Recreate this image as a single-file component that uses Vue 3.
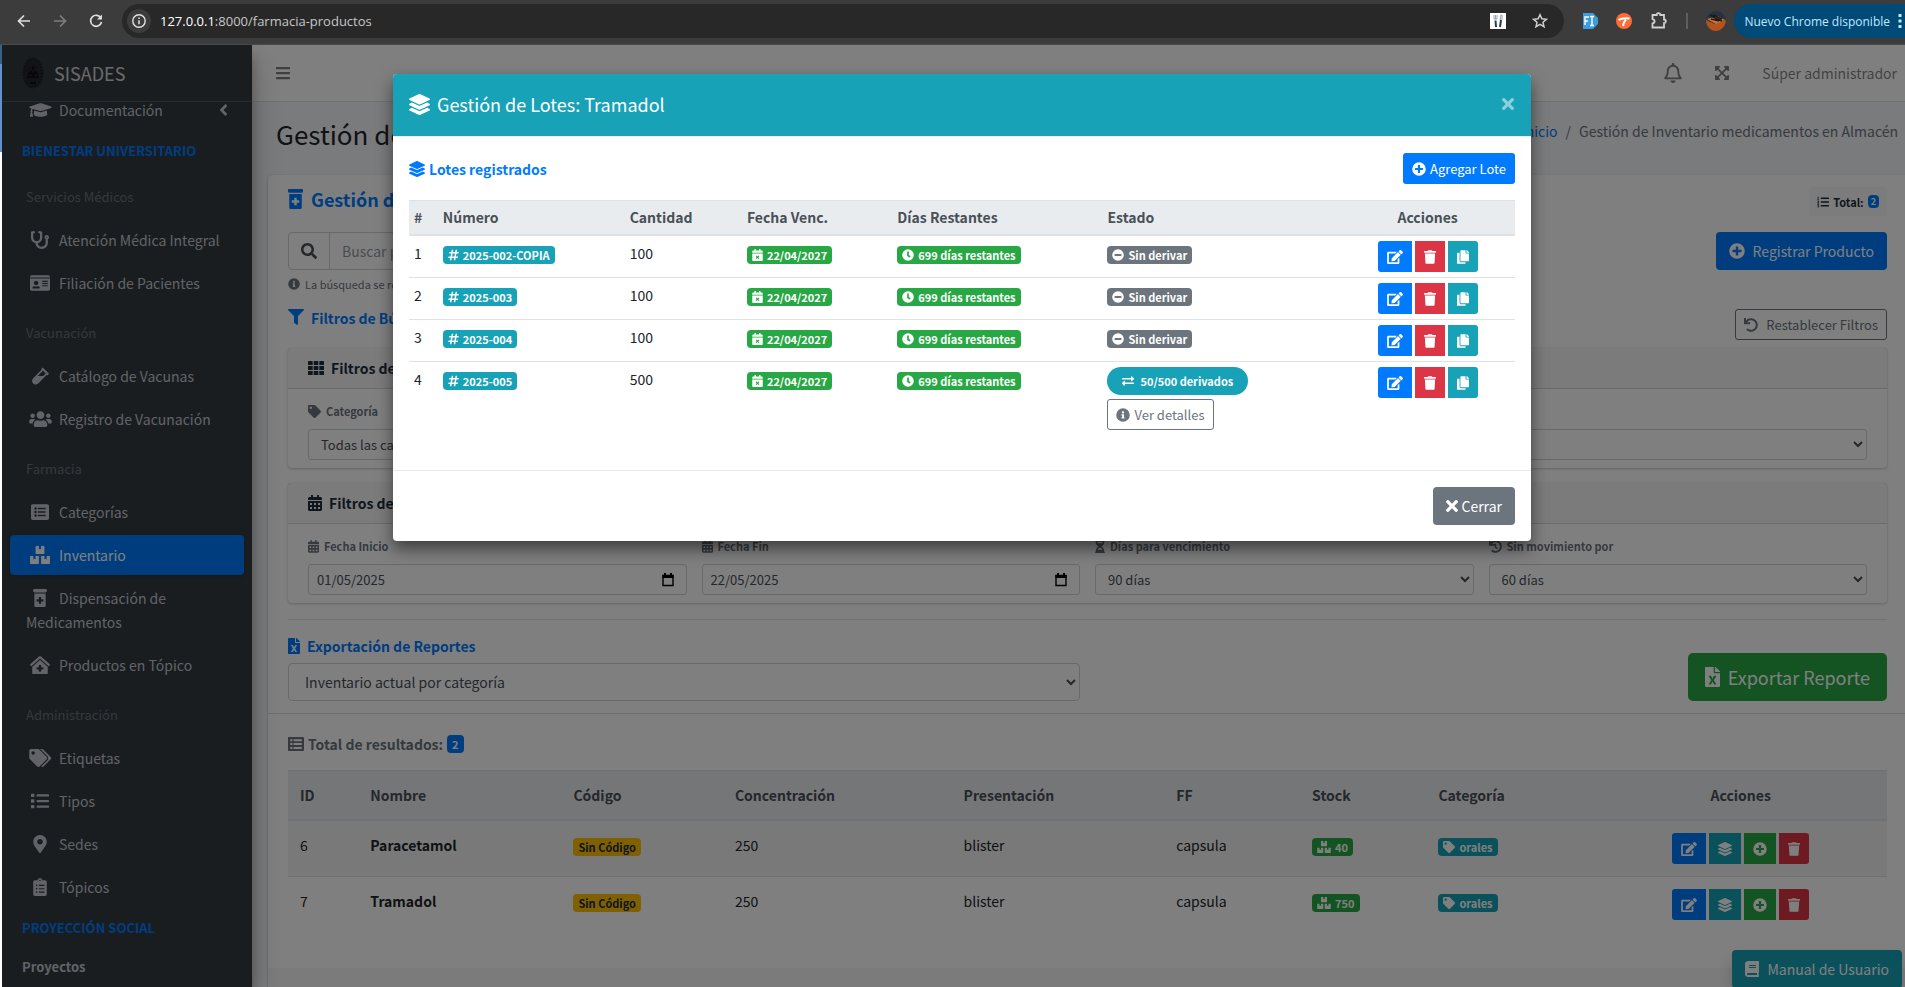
<script setup>
import { h } from 'vue'

const bottle = 'M360 0H24C10.8 0 0 10.8 0 24v48c0 13.2 10.8 24 24 24h336c13.2 0 24-10.8 24-24V24c0-13.2-10.8-24-24-24zM32 480c0 17.6 14.4 32 32 32h256c17.6 0 32-14.4 32-32V128H32v352zm64-184c0-4.4 3.6-8 8-8h56v-56c0-4.4 3.6-8 8-8h48c4.4 0 8 3.6 8 8v56h56c4.4 0 8 3.6 8 8v48c0 4.4-3.6 8-8 8h-56v56c0 4.4-3.6 8-8 8h-48c-4.4 0-8-3.6-8-8v-56h-56c-4.4 0-8-3.6-8-8v-48z'
const tag = 'M0 252.1V48C0 21.5 21.5 0 48 0h204.100a48 48 0 0 1 33.900 14.100l211.900 211.800c18.700 18.700 18.700 49.100 0 67.900L293.800 497.900c-18.700 18.700-49.100 18.700-67.900 0L14.100 286.100A48 48 0 0 1 0 252.100zM112 64c-26.500 0-48 21.500-48 48s21.500 48 48 48 48-21.500 48-48-21.500-48-48-48z'
const undo = 'M212.300 224.300H12c-6.600 0-12-5.400-12-12V12C0 5.400 5.400 0 12 0h48c6.600 0 12 5.400 12 12v78.100C117.800 39.300 184.300 7.500 258.200 8c136.900 1 246.400 111.600 246.100 248.500C504 393.300 393.100 504 256.300 504c-64.100 0-122.500-24.300-166.500-64.200-5.100-4.600-5.300-12.600-.5-17.400l34-34c4.500-4.500 11.700-4.700 16.400-.5C170.800 415.300 211.600 432 256.300 432c97.300 0 176-78.700 176-176 0-97.300-78.700-176-176-176-58.500 0-110.300 28.500-142.300 72.300h98.300c6.600 0 12 5.400 12 12v48c0 6.600-5.400 12-12 12z'
const calendar = 'M436 160H12c-6.600 0-12-5.400-12-12v-36c0-26.500 21.500-48 48-48h48V12c0-6.600 5.400-12 12-12h40c6.600 0 12 5.400 12 12v52h128V12c0-6.600 5.400-12 12-12h40c6.600 0 12 5.400 12 12v52h48c26.500 0 48 21.500 48 48v36c0 6.600-5.400 12-12 12zM12 192h424c6.600 0 12 5.400 12 12v260c0 26.500-21.500 48-48 48H48c-26.500 0-48-21.500-48-48V204c0-6.600 5.400-12 12-12z'
const disc = 'M256 504A248 248 0 1 0 256 8a248 248 0 1 0 0 496z'

const icons = {
  layers: [512, 'M12.400 148l232.900 105.700c6.800 3.100 14.500 3.100 21.300 0L499.600 148c16.500-7.500 16.500-32.500 0-40L266.600 2.300a25.600 25.600 0 0 0-21.300 0L12.400 108c-16.500 7.500-16.500 32.500 0 40zm487.200 88.300l-58.100-26.300-161.600 73.200c-7.600 3.400-15.600 5.200-23.900 5.200s-16.300-1.700-23.900-5.200L70.500 210l-58.100 26.300c-16.500 7.500-16.500 32.500 0 40l232.900 105.600c6.800 3.100 14.500 3.100 21.300 0L499.600 276.300c16.500-7.500 16.500-32.500 0-40zm0 127.800l-57.900-26.200-161.800 73.300c-7.600 3.400-15.600 5.200-23.900 5.200s-16.300-1.700-23.900-5.200L70.300 337.900 12.400 364.100c-16.500 7.500-16.500 32.500 0 40l232.900 105.600c6.800 3.100 14.500 3.100 21.300 0L499.600 404.100c16.500-7.500 16.500-32.500 0-40z'],
  plus: [512, disc + 'M400 284c0 6.600-5.400 12-12 12h-92v92c0 6.600-5.400 12-12 12h-56c-6.600 0-12-5.400-12-12v-92h-92c-6.600 0-12-5.400-12-12v-56c0-6.600 5.400-12 12-12h92v-92c0-6.600 5.400-12 12-12h56c6.600 0 12 5.400 12 12v92h92c6.600 0 12 5.400 12 12v56z'],
  minus: [512, disc + 'M124 296c-6.600 0-12-5.400-12-12v-56c0-6.600 5.400-12 12-12h264c6.600 0 12 5.400 12 12v56c0 6.600-5.400 12-12 12H124z'],
  info: [512, disc + 'M256 118a42 42 0 1 1 0 84 42 42 0 1 1 0-84zM212 228h68c7 0 12 5 12 12v100h8c7 0 12 5 12 12v24c0 7-5 12-12 12h-88c-7 0-12-5-12-12v-24c0-7 5-12 12-12h12v-64h-12c-7 0-12-5-12-12v-24c0-7 5-12 12-12z'],
  clock: [512, disc + 'M313 358l-88-64c-3-2-5-6-5-10V116c0-7 5-12 12-12h48c7 0 12 5 12 12v138l65 47c6 4 7 11 3 17l-28 38c-4 6-12 7-19 2z'],
  trash: [448, 'M432 32H312l-9.400-18.700A24 24 0 0 0 281.100 0H166.800a24 24 0 0 0-21.400 13.300L136 32H16A16 16 0 0 0 0 48v32a16 16 0 0 0 16 16h416a16 16 0 0 0 16-16V48a16 16 0 0 0-16-16zM53.200 467a48 48 0 0 0 47.900 45h245.800a48 48 0 0 0 47.900-45L416 128H32z'],
  edit: [576, 'M402.600 83.200l90.200 90.200c3.800 3.800 3.800 10 0 13.800L274.400 405.600l-92.800 10.300c-12.400 1.400-22.900-9.100-21.500-21.500l10.300-92.800L388.800 83.200c3.800-3.800 10-3.800 13.800 0zm162-22.900l-48.800-48.800c-15.200-15.200-39.900-15.200-55.200 0l-35.400 35.400c-3.800 3.800-3.800 10 0 13.800l90.200 90.200c3.800 3.800 10 3.800 13.800 0l35.400-35.400c15.200-15.300 15.200-40 0-55.200zM384 346.200V448H64V128h229.800c3.200 0 6.200-1.300 8.500-3.500l40-40c7.600-7.600 2.200-20.500-8.500-20.500H48C21.500 64 0 85.500 0 112v352c0 26.500 21.500 48 48 48h352c26.500 0 48-21.500 48-48V306.200c0-10.700-12.900-16-20.500-8.500l-40 40c-2.200 2.300-3.500 5.300-3.500 8.500z'],
  copy: [448, 'M320 448v40c0 13.300-10.700 24-24 24H24c-13.300 0-24-10.700-24-24V120c0-13.300 10.700-24 24-24h72v296c0 30.900 25.100 56 56 56h168zm0-344V0H152c-13.300 0-24 10.700-24 24v368c0 13.300 10.700 24 24 24h272c13.300 0 24-10.700 24-24V128H344c-13.200 0-24-10.800-24-24zm121-31L375 7a24 24 0 0 0-17-7h-6v96h96v-6a24 24 0 0 0-7-17z'],
  times: [352, 'M242.700 256l100.100-100.100c12.300-12.300 12.300-32.200 0-44.500l-22.200-22.200c-12.300-12.300-32.200-12.300-44.500 0L176 189.300 75.900 89.200c-12.300-12.300-32.200-12.300-44.500 0L9.200 111.400c-12.300 12.300-12.300 32.200 0 44.500L109.300 256 9.200 356.100c-12.300 12.300-12.300 32.200 0 44.500l22.200 22.200c12.300 12.300 32.200 12.300 44.500 0L176 322.700l100.100 100.100c12.300 12.300 32.200 12.300 44.500 0l22.200-22.200c12.300-12.300 12.300-32.200 0-44.500L242.700 256z'],
  hash: [448, 'M440.700 182.100l7.100-40c1.300-7.400-4.300-14.100-11.800-14.100h-74.800l14.600-81.900C377.100 38.800 371.500 32 364 32h-40.600a12 12 0 0 0-11.800 9.900L296.200 128h-98.700l14.600-81.900C213.500 38.800 207.800 32 200.300 32h-40.600a12 12 0 0 0-11.800 9.900L132.500 128H53.400a12 12 0 0 0-11.800 9.900l-7.100 40C33.200 185.200 38.800 192 46.300 192h74.800L98.200 320H19.100a12 12 0 0 0-11.800 9.900l-7.100 40C-1.100 377.200 4.500 384 12 384h74.800l-14.600 81.900C70.900 473.200 76.500 480 84 480h40.600a12 12 0 0 0 11.800-9.900L151.800 384h98.700l-14.600 81.900c-1.400 7.300 4.300 14.100 11.800 14.100h40.600a12 12 0 0 0 11.800-9.900L315.500 384h79.100a12 12 0 0 0 11.800-9.900l7.100-40c1.300-7.400-4.300-14.100-11.800-14.100h-74.800l22.900-128h79.100a12 12 0 0 0 11.800-9.900zM261.900 320h-98.600l22.900-128h98.600l-22.900 128z'],
  calx: [448, calendar + 'M224 318l44-44 34 34-44 44 44 44-34 34-44-44-44 44-34-34 44-44-44-44 34-34z'],
  cal: [448, calendar + 'M64 256h64v64H64zM192 256h64v64h-64zM320 256h64v64h-64zM64 384h64v64H64zM192 384h64v64h-64zM320 384h64v64h-64z'],
  search: [512, 'M505 442.700L405.300 343c-4.500-4.500-10.600-7-17-7H372c27.600-35.300 44-79.700 44-128C416 93.100 322.900 0 208 0S0 93.100 0 208s93.100 208 208 208c48.300 0 92.700-16.400 128-44v16.300c0 6.400 2.500 12.500 7 17l99.700 99.700c9.400 9.400 24.600 9.400 33.900 0l28.300-28.300c9.400-9.400 9.400-24.600.1-34zM208 336c-70.700 0-128-57.200-128-128 0-70.700 57.200-128 128-128 70.700 0 128 57.200 128 128 0 70.700-57.200 128-128 128z'],
  filter: [512, 'M488 0H24C2.700 0-8 25.900 7.100 41L192 225.900V432c0 7.800 3.800 15.200 10.200 19.700l80 56C298 518.700 320 507.500 320 488V225.900L504.900 41C520 25.900 509.300 0 488 0z'],
  grid: [512, 'M20 32h110c12 0 20 8 20 20v88c0 12-8 20-20 20H20c-12 0-20-8-20-20V52c0-12 8-20 20-20zM201 32h110c12 0 20 8 20 20v88c0 12-8 20-20 20H201c-12 0-20-8-20-20V52c0-12 8-20 20-20zM382 32h110c12 0 20 8 20 20v88c0 12-8 20-20 20H382c-12 0-20-8-20-20V52c0-12 8-20 20-20zM0 192h150v128H0zM181 192h150v128H181zM362 192h150v128H362zM0 352h150v128H20c-12 0-20-8-20-20zM181 352h150v128H181zM362 352h150v108c0 12-8 20-20 20H362z'],
  tag: [512, tag],
  tags: [640, tag + 'M609.900 293.800L405.800 497.900c-18.700 18.700-49.100 18.700-67.900 0l-.4-.4L511.600 323.600c16.200-16.200 25.200-37.800 25.200-60.700s-8.900-44.500-25.200-60.700L309.500 0h54.600a48 48 0 0 1 33.900 14.100l211.900 211.800c18.800 18.800 18.800 49.200 0 67.900z'],
  exchange: [512, 'M0 168v-16c0-13.300 10.700-24 24-24h360V80c0-21.400 25.900-32 41-17l80 80c9.400 9.400 9.400 24.600 0 34l-80 80c-15 15-41 4.400-41-17v-48H24c-13.300 0-24-10.700-24-24zm488 152H128v-48c0-21.300-25.900-32.100-41-17L7 335c-9.400 9.400-9.400 24.600 0 34l80 80c15 15 41 4.400 41-17v-48h360c13.300 0 24-10.700 24-24v-16c0-13.300-10.700-24-24-24z'],
  cap: [640, 'M622.300 153.200L343.400 67.500c-15.200-4.700-31.600-4.700-46.800 0L17.700 153.200c-23.500 7.200-23.500 38.400 0 45.600l48.600 14.900c-10.700 13.200-17.200 29.300-17.900 46.900C38.800 266.100 32 276.100 32 288c0 10.800 5.700 19.900 13.900 25.700L20.300 428.500C18.100 438.500 25.700 448 35.900 448h56.100c10.200 0 17.800-9.500 15.600-19.500L82.100 313.700C90.300 307.900 96 298.800 96 288c0-11.600-6.500-21.200-15.700-26.900.8-15 8.400-28.300 20.700-36.700l195.600 60.100c9.100 2.800 26.400 6.200 46.800 0l278.900-85.700c23.600-7.200 23.600-38.400 0-45.600zM352.800 315.100c-28.500 8.800-52.800 3.900-65.600 0l-145-44.600L128 384c0 35.300 86 64 192 64s192-28.700 192-64l-14.200-113.500-145 44.600z'],
  steth: [512, 'M447.100 112c-34.200.5-62.300 28.400-63 62.600-.5 24.300 12.500 45.600 32 56.800V344c0 57.300-50.200 104-112 104-60 0-109.200-44.100-111.900-99.200C265 333.800 320 269.200 320 192V36.600c0-11.400-8.100-21.300-19.300-23.500L237.800.5c-13-2.600-25.600 5.800-28.200 18.800L206.400 35c-2.600 13 5.800 25.600 18.800 28.200l30.700 6.100v121.400c0 52.900-42.200 96.700-95.100 97.200-53.400.5-96.900-42.700-96.900-96V69.400l30.700-6.100c13-2.600 21.400-15.200 18.800-28.200l-3.100-15.700C107.700 6.400 95.100-2 82.100.6L19.300 13C8.100 15.300 0 25.100 0 36.600V192c0 77.300 55.100 142 128.100 156.800C130.700 439.200 208.600 512 304 512c97 0 176-75.400 176-168V231.400c19.100-11.100 32-31.700 32-55.400 0-35.700-29.200-64.500-64.900-64zm.9 80c-8.800 0-16-7.200-16-16s7.200-16 16-16 16 7.200 16 16-7.200 16-16 16z'],
  idcard: [576, 'M528 32H48C21.500 32 0 53.500 0 80v16h576V80c0-26.500-21.500-48-48-48zM0 432c0 26.500 21.500 48 48 48h480c26.500 0 48-21.500 48-48V128H0v304zm352-232c0-4.400 3.600-8 8-8h144c4.400 0 8 3.600 8 8v16c0 4.400-3.600 8-8 8H360c-4.400 0-8-3.600-8-8v-16zm0 64c0-4.400 3.600-8 8-8h144c4.400 0 8 3.600 8 8v16c0 4.400-3.600 8-8 8H360c-4.400 0-8-3.600-8-8v-16zm0 64c0-4.400 3.600-8 8-8h144c4.400 0 8 3.600 8 8v16c0 4.400-3.600 8-8 8H360c-4.400 0-8-3.600-8-8v-16zM176 192c35.300 0 64 28.700 64 64s-28.700 64-64 64-64-28.700-64-64 28.700-64 64-64zM67.100 396.200C75.500 370.500 99.600 352 128 352h8.200c12.300 5.100 25.700 8 39.800 8s27.600-2.900 39.800-8h8.200c28.400 0 52.500 18.500 60.900 44.200 3.200 9.900-5.200 19.800-15.600 19.800H82.700c-10.400 0-18.800-10-15.600-19.800z'],
  vial: [480, 'M477.700 186.100L309.500 18.300c-3.100-3.100-8.200-3.100-11.300 0l-34 33.900c-3.100 3.100-3.100 8.200 0 11.300l11.200 11.100L33 316.500c-38.800 38.700-45.100 102-9.400 143.500 20.600 24 49.500 36 78.400 35.900 26.400 0 52.800-10 72.900-30.100l246.300-245.700 11.200 11.100c3.100 3.100 8.200 3.100 11.300 0l34-33.900c3.100-3 3.100-8.100 0-11.200zM318 256H161l148-147.700 78.500 78.300L318 256z'],
  users: [640, 'M96 224c35.300 0 64-28.700 64-64s-28.700-64-64-64-64 28.700-64 64 28.700 64 64 64zm448 0c35.300 0 64-28.700 64-64s-28.700-64-64-64-64 28.700-64 64 28.700 64 64 64zm32 32h-64c-17.600 0-33.500 7.100-45.100 18.600 40.300 22.100 68.900 62 75.100 109.400h66c17.700 0 32-14.300 32-32v-32c0-35.300-28.700-64-64-64zm-256 0c61.900 0 112-50.100 112-112S381.900 32 320 32 208 82.100 208 144s50.100 112 112 112zm76.800 32h-8.300c-20.800 10-43.900 16-68.500 16s-47.600-6-68.500-16h-8.300C179.600 288 128 339.600 128 403.200V432c0 26.500 21.500 48 48 48h288c26.500 0 48-21.500 48-48v-28.800c0-63.600-51.600-115.200-115.200-115.200zm-223.700-13.400C161.500 263.100 145.600 256 128 256H64c-35.300 0-64 28.700-64 64v32c0 17.700 14.300 32 32 32h65.900c6.300-47.400 34.900-87.300 75.200-109.400z'],
  listalt: [512, 'M464 480H48c-26.500 0-48-21.500-48-48V80c0-26.500 21.500-48 48-48h416c26.500 0 48 21.500 48 48v352c0 26.500-21.500 48-48 48zM128 120a36 36 0 1 0 0 72 36 36 0 1 0 0-72zM128 220a36 36 0 1 0 0 72 36 36 0 1 0 0-72zM128 320a36 36 0 1 0 0 72 36 36 0 1 0 0-72zM204 132h200c7 0 12 5 12 12v24c0 7-5 12-12 12H204c-7 0-12-5-12-12v-24c0-7 5-12 12-12zM204 232h200c7 0 12 5 12 12v24c0 7-5 12-12 12H204c-7 0-12-5-12-12v-24c0-7 5-12 12-12zM204 332h200c7 0 12 5 12 12v24c0 7-5 12-12 12H204c-7 0-12-5-12-12v-24c0-7 5-12 12-12z'],
  tablelist: [512, 'M480 32H32C14 32 0 46 0 64v384c0 18 14 32 32 32h448c18 0 32-14 32-32V64c0-18-14-32-32-32zM72 100h72v64H72zM180 100h260v64H180zM72 224h72v64H72zM180 224h260v64H180zM72 348h72v64H72zM180 348h260v64H180z'],
  boxes: [576, 'M560 288h-80v96l-32-21.300-32 21.300v-96h-80c-8.800 0-16 7.200-16 16v192c0 8.800 7.200 16 16 16h224c8.800 0 16-7.200 16-16V304c0-8.800-7.200-16-16-16zm-384-64h224c8.800 0 16-7.200 16-16V16c0-8.800-7.200-16-16-16h-80v96l-32-21.300L256 96V0h-80c-8.800 0-16 7.200-16 16v192c0 8.800 7.200 16 16 16zm64 64h-80v96l-32-21.300L96 384v-96H16c-8.800 0-16 7.200-16 16v192c0 8.800 7.200 16 16 16h224c8.800 0 16-7.200 16-16V304c0-8.800-7.200-16-16-16z'],
  bottle: [384, bottle],
  clinic: [576, 'M288 115L69.500 307.700c-1.600 1.500-3.700 2.100-5.500 3.400V496a16 16 0 0 0 16 16h416a16 16 0 0 0 16-16V311.100c-1.700-1.200-3.700-1.800-5.300-3.200zm96 261a8 8 0 0 1-8 8h-56v56a8 8 0 0 1-8 8h-48a8 8 0 0 1-8-8v-56h-56a8 8 0 0 1-8-8v-48a8 8 0 0 1 8-8h56v-56a8 8 0 0 1 8-8h48a8 8 0 0 1 8 8v56h56a8 8 0 0 1 8 8zm186.700-139.700l-255.900-226a39.800 39.800 0 0 0-53.500 0l-256 226a16 16 0 0 0-1.200 22.600l21.400 23.800a16 16 0 0 0 22.600 1.200L277.400 81.600a16 16 0 0 1 21.200 0l229.300 202.300a16 16 0 0 0 22.600-1.200l21.400-23.800a16 16 0 0 0-1.200-22.600z'],
  list: [512, 'M80 368H16a16 16 0 0 0-16 16v64a16 16 0 0 0 16 16h64a16 16 0 0 0 16-16v-64a16 16 0 0 0-16-16zm0-320H16A16 16 0 0 0 0 64v64a16 16 0 0 0 16 16h64a16 16 0 0 0 16-16V64a16 16 0 0 0-16-16zm0 160H16a16 16 0 0 0-16 16v64a16 16 0 0 0 16 16h64a16 16 0 0 0 16-16v-64a16 16 0 0 0-16-16zm416 176H176a16 16 0 0 0-16 16v32a16 16 0 0 0 16 16h320a16 16 0 0 0 16-16v-32a16 16 0 0 0-16-16zm0-320H176a16 16 0 0 0-16 16v32a16 16 0 0 0 16 16h320a16 16 0 0 0 16-16V80a16 16 0 0 0-16-16zm0 160H176a16 16 0 0 0-16 16v32a16 16 0 0 0 16 16h320a16 16 0 0 0 16-16v-32a16 16 0 0 0-16-16z'],
  listol: [512, 'M30 32h34v104h24v28H12v-28h20V62H14zM12 204h64c8 0 14 6 14 14v34l-42 36h42v28H10v-32l50-42v-10H12zM12 352h66c8 0 12 5 12 12v104c0 7-5 12-12 12H12v-26h48v-22H26v-26h34v-26H12zM176 64h320a16 16 0 0 1 16 16v32a16 16 0 0 1-16 16H176a16 16 0 0 1-16-16V80a16 16 0 0 1 16-16zM176 224h320a16 16 0 0 1 16 16v32a16 16 0 0 1-16 16H176a16 16 0 0 1-16-16v-32a16 16 0 0 1 16-16zM176 384h320a16 16 0 0 1 16 16v32a16 16 0 0 1-16 16H176a16 16 0 0 1-16-16v-32a16 16 0 0 1 16-16z'],
  marker: [384, 'M172.300 501.700C27 291 0 269.400 0 192 0 86 86 0 192 0s192 86 192 192c0 77.400-27 99-172.300 309.700-9.500 13.800-29.900 13.800-39.400 0zM192 272c44.200 0 80-35.800 80-80s-35.800-80-80-80-80 35.800-80 80 35.800 80 80 80z'],
  clipboard: [384, 'M336 64h-80c0-35.300-28.700-64-64-64s-64 28.700-64 64H48C21.500 64 0 85.500 0 112v352c0 26.500 21.500 48 48 48h288c26.500 0 48-21.500 48-48V112c0-26.500-21.500-48-48-48zM96 424c-13.300 0-24-10.700-24-24s10.700-24 24-24 24 10.700 24 24-10.700 24-24 24zm0-96c-13.300 0-24-10.700-24-24s10.700-24 24-24 24 10.700 24 24-10.700 24-24 24zm0-96c-13.300 0-24-10.700-24-24s10.700-24 24-24 24 10.700 24 24-10.700 24-24 24zm96-192c13.300 0 24 10.700 24 24s-10.700 24-24 24-24-10.700-24-24 10.700-24 24-24zm128 368c0 4.400-3.600 8-8 8H168c-4.400 0-8-3.600-8-8v-16c0-4.400 3.600-8 8-8h144c4.400 0 8 3.600 8 8v16zm0-96c0 4.400-3.600 8-8 8H168c-4.400 0-8-3.600-8-8v-16c0-4.400 3.600-8 8-8h144c4.400 0 8 3.600 8 8v16zm0-96c0 4.400-3.600 8-8 8H168c-4.400 0-8-3.600-8-8v-16c0-4.400 3.600-8 8-8h144c4.400 0 8 3.600 8 8v16z'],
  angle: [256, 'M31.700 239l136-136c9.400-9.400 24.600-9.400 33.900 0l22.600 22.600c9.400 9.400 9.400 24.600 0 33.900L127.900 256l96.400 96.400c9.400 9.400 9.400 24.600 0 33.900L201.700 409c-9.400 9.400-24.600 9.400-33.900 0l-136-136c-9.500-9.400-9.500-24.600-.1-34z'],
  bars: [448, 'M16 132h416c8.800 0 16-7.200 16-16V76c0-8.800-7.200-16-16-16H16C7.200 60 0 67.200 0 76v40c0 8.800 7.200 16 16 16zm0 160h416c8.800 0 16-7.200 16-16v-40c0-8.800-7.200-16-16-16H16c-8.800 0-16 7.200-16 16v40c0 8.800 7.200 16 16 16zm0 160h416c8.800 0 16-7.200 16-16v-40c0-8.800-7.200-16-16-16H16c-8.800 0-16 7.200-16 16v40c0 8.800 7.200 16 16 16z'],
  bell: [448, 'M439.400 362.300c-19.300-20.800-55.500-52-55.500-154.300 0-77.700-54.500-139.900-127.900-155.200V32c0-17.700-14.300-32-32-32s-32 14.300-32 32v20.800C118.600 68.100 64.100 130.300 64.100 208c0 102.300-36.200 133.500-55.500 154.300-6 6.500-8.700 14.200-8.600 21.700.1 16.400 13 32 32.100 32h383.800c19.100 0 32-15.600 32.100-32 0-7.500-2.600-15.300-8.600-21.700zM67.500 368c21.200-28 44.400-74.300 44.500-159.400v-.6c0-61.900 50.100-112 112-112s112 50.100 112 112v.6c.1 85.100 23.300 131.500 44.500 159.400H67.500zM224 512c35.300 0 64-28.700 64-64H160c0 35.300 28.700 64 64 64z'],
  expand: [448, 'M448 344v112a24 24 0 0 1-24 24H312c-21.400 0-32.100-25.900-17-41l36.200-36.200L224 295.600 116.800 402.900 153 439c15.100 15.100 4.400 41-17 41H24a24 24 0 0 1-24-24V344c0-21.400 25.900-32.100 41-17l36.200 36.200L184.500 256 77.200 148.700 41 185c-15.100 15.100-41 4.400-41-17V56a24 24 0 0 1 24-24h112c21.400 0 32.100 25.900 17 41l-36.200 36.200L224 216.400l107.200-107.300L295 73c-15.100-15.100-4.400-41 17-41h112a24 24 0 0 1 24 24v112c0 21.400-25.900 32.100-41 17l-36.200-36.200L263.500 256l107.300 107.300L407 327.100c15.100-15.200 41-4.500 41 16.900z'],
  undo: [512, undo],
  history: [512, undo + 'M228 144h56v128l66 48-34 46-88-64z'],
  hourglass: [384, 'M360 0H24C10.700 0 0 10.700 0 24v16c0 13.300 10.700 24 24 24 0 91 51 167.700 120.800 192C75 280.300 24 357 24 448c-13.300 0-24 10.700-24 24v16c0 13.300 10.700 24 24 24h336c13.300 0 24-10.700 24-24v-16c0-13.300-10.700-24-24-24 0-91-51-167.700-120.800-192C309 231.700 360 155 360 64c13.300 0 24-10.700 24-24V24c0-13.300-10.700-24-24-24zm-75.100 384H99.100c17.100-46.800 52.100-80 92.900-80 40.800 0 75.900 33.200 92.900 80zm0-256H99.100C92 108.500 88 86.700 88 64h208c0 22.800-4 44.600-11.100 64z'],
  excel: [384, 'M224 136V0H24C10.700 0 0 10.700 0 24v464c0 13.300 10.700 24 24 24h336c13.300 0 24-10.700 24-24V160H248c-13.200 0-24-10.800-24-24zm60.100 106.500L224 336l60.100 93.500c5.100 8-.6 18.500-10.100 18.500h-34.900c-4.400 0-8.500-2.400-10.600-6.300C208.900 405.500 192 373 192 373c-6.400 14.800-10 20-36.600 68.800-2.100 3.900-6.100 6.300-10.500 6.300H110c-9.500 0-15.200-10.500-10.100-18.500l60.300-93.500-60.300-93.500c-5.200-8 .6-18.500 10.100-18.500h34.800c4.400 0 8.500 2.400 10.600 6.300 26.100 48.800 20 33.600 36.600 68.500 0 0 6.100-11.700 36.600-68.500 2.100-3.900 6.200-6.300 10.600-6.300H274c9.500-.1 15.200 10.400 10.100 18.400zM384 121.900v6.100H256V0h6.100c6.400 0 12.500 2.500 17 7l97.900 98c4.500 4.500 7 10.600 7 16.900z'],
  book: [448, 'M448 360V24c0-13.300-10.700-24-24-24H96C43 0 0 43 0 96v320c0 53 43 96 96 96h328c13.300 0 24-10.700 24-24v-16c0-7.500-3.500-14.300-8.900-18.700-4.200-15.400-4.200-59.300 0-74.700 5.400-4.300 8.900-11.100 8.900-18.600zM128 134c0-3.300 2.700-6 6-6h212c3.300 0 6 2.700 6 6v20c0 3.300-2.700 6-6 6H134c-3.300 0-6-2.700-6-6v-20zm0 64c0-3.300 2.700-6 6-6h212c3.300 0 6 2.700 6 6v20c0 3.300-2.700 6-6 6H134c-3.300 0-6-2.700-6-6v-20zm253.400 250H96c-17.700 0-32-14.300-32-32 0-17.600 14.400-32 32-32h285.400c-1.900 17.100-1.900 46.900 0 64z'],
}

const Icon = (props) => {
  const [w, d] = icons[props.n]
  const s = Number(props.s || 16)
  return h('svg', { class: 'ic', viewBox: `0 0 ${w} 512`, width: Math.round((s * w) / 512), height: s, 'aria-hidden': 'true' },
    [h('path', { d, fill: 'currentColor', 'fill-rule': 'evenodd' })])
}
Icon.props = ['n', 's']

const sections = [
  { title: 'Servicios Médicos', items: [['steth', 'Atención Médica Integral'], ['idcard', 'Filiación de Pacientes']] },
  { title: 'Vacunación', items: [['vial', 'Catálogo de Vacunas'], ['users', 'Registro de Vacunación']] },
  { title: 'Farmacia', items: [['listalt', 'Categorías'], ['boxes', 'Inventario', true], ['bottle', 'Dispensación de Medicamentos'], ['clinic', 'Productos en Tópico']] },
  { title: 'Administración', items: [['tags', 'Etiquetas'], ['list', 'Tipos'], ['marker', 'Sedes'], ['clipboard', 'Tópicos']] },
]
const products = [
  { id: 6, name: 'Paracetamol', stock: 40 },
  { id: 7, name: 'Tramadol', stock: 750 },
]
const lots = [
  { n: 1, code: '2025-002-COPIA', qty: 100 },
  { n: 2, code: '2025-003', qty: 100 },
  { n: 3, code: '2025-004', qty: 100 },
  { n: 4, code: '2025-005', qty: 500, derived: '50/500 derivados' },
]
</script>

<template>
  <div class="window">
    <header class="chrome">
      <div class="nav-btns">
        <button aria-label="Atrás"><svg width="16" height="16" viewBox="0 0 16 16"><path d="M14 8H3M8 2.500 2.500 8 8 13.500" fill="none" stroke="#dedede" stroke-width="1.700" /></svg></button>
        <button aria-label="Adelante"><svg width="16" height="16" viewBox="0 0 16 16"><path d="M2 8h11M8 2.500 13.500 8 8 13.500" fill="none" stroke="#7c7c7c" stroke-width="1.700" /></svg></button>
        <button aria-label="Recargar"><svg width="16" height="16" viewBox="0 0 16 16"><path d="M13 5.200A5.500 5.500 0 1 0 13.500 9" fill="none" stroke="#dedede" stroke-width="1.700" /><path d="M14 1.500v5H9z" fill="#dedede" /></svg></button>
      </div>
      <div class="omnibox">
        <span class="site-info"><svg width="16" height="16" viewBox="0 0 16 16"><circle cx="8" cy="8" r="6.200" fill="none" stroke="#e3e3e3" stroke-width="1.400" /><path d="M8 7.200v4M8 4.500v1.500" stroke="#e3e3e3" stroke-width="1.500" /></svg></span>
        <span class="url">127.0.0.1<i>:8000/farmacia-productos</i></span>
        <svg width="16" height="16" viewBox="0 0 16 16"><path fill="#fff" d="M0 0h16v16H0z" /><path d="M4 2v4h3V2M5.500 2v4M10 7l1-5 1 0v5" stroke="#9aa5ad" fill="none" /><path d="M5.500 7.500 6 14M11 7l-1 7" stroke="#2b3b47" stroke-width="2" /></svg>
        <svg width="16" height="16" viewBox="0 0 16 16"><path d="M8 1.700l1.900 4.100 4.500.5-3.400 3 1 4.400L8 11.400l-4 2.300 1-4.400-3.400-3 4.500-.5z" fill="none" stroke="#d0d0d0" stroke-width="1.500" /></svg>
      </div>
      <div class="extensions">
        <svg width="16" height="16" viewBox="0 0 16 16"><path d="M1 0h10l5 5v6l-5 5H1z" fill="#3b9ddd" /><path d="M3 12V4h4M3 8h3M8 3.500h4M10 3.500v9M8 12.500h4" stroke="#fff" stroke-width="1.400" fill="none" /></svg>
        <svg width="16" height="16" viewBox="0 0 16 16"><circle cx="8" cy="8" r="8" fill="#ff6c37" /><path d="M2.500 7c3-2 6-2 11-1.500M10 6.500C8 8.500 7.500 10 7 13" stroke="#fff" stroke-width="2" fill="none" /></svg>
        <svg width="18" height="18" viewBox="0 0 18 18"><path d="M2.500 3h4.200a1.800 1.800 0 0 1 3.600 0h3.700v4.500a1.800 1.800 0 0 1 0 3.600V15.500H2.500v-4c2.800-.5 2.800-3.900 0-4.400z" fill="none" stroke="#d0d0d0" stroke-width="1.800" /></svg>
        <span class="divider"></span>
        <svg width="20" height="20" viewBox="0 0 20 20"><circle cx="10" cy="10" r="10" fill="#26323f" /><path d="M0 9l9 4 11-4c0 5-4 11-10 11S0 15 0 9z" fill="#b5521e" /><path d="M1 8l9 5 9-4-7-4z" fill="#d8742f" /><path d="M4 4l5 3 7 3M7 4l9 4M5 8l8 2" stroke="#161b22" stroke-width="1.600" fill="none" /></svg>
      </div>
      <button class="update">Nuevo Chrome disponible<svg width="4" height="16" viewBox="0 0 4 16"><path d="M2 1v3M2 6.500v3M2 12v3" stroke="#c2e7ff" stroke-width="3" /></svg></button>
    </header>

    <div class="viewport">
      <div class="edge"></div>
      <div class="page">
        <aside class="sidebar">
          <a href="#" class="brand">
            <svg width="34" height="34" viewBox="0 0 34 34"><ellipse cx="16" cy="17" rx="9" ry="14" fill="#24292e" stroke="#1d2125" stroke-width="3" stroke-dasharray="2 1" /><ellipse cx="16" cy="17" rx="6" ry="9" fill="#20252a" /><path d="M10 21h12M11 19l3-3 2 3 2-3 3 3M16 10v4M13 27h6" stroke="#0c0e10" stroke-width="2" fill="none" /></svg>
            <span>SISADES</span>
          </a>
          <nav class="menu">
            <a href="#" class="item first"><span class="mi"><Icon n="cap" s="18" /></span>Documentación<Icon n="angle" s="18" class="caret" /></a>
            <div class="group">BIENESTAR UNIVERSITARIO</div>
            <template v-for="s in sections" :key="s.title">
              <div class="heading">{{ s.title }}</div>
              <a v-for="i in s.items" :key="i[1]" href="#" class="item" :class="{ active: i[2] }"><span class="mi"><Icon :n="i[0]" s="18" /></span>{{ i[1] }}</a>
            </template>
            <div class="group">PROYECCIÓN SOCIAL</div>
            <div class="group plain">Proyectos</div>
          </nav>
        </aside>

        <div class="main">
          <div class="navbar">
            <button class="bare" aria-label="Menú"><Icon n="bars" s="16" /></button>
            <div class="nav-right">
              <button class="bare" aria-label="Notificaciones"><Icon n="bell" s="20" /></button>
              <button class="bare" aria-label="Pantalla completa"><Icon n="expand" s="16" /></button>
              <a href="#" class="user">Súper administrador</a>
            </div>
          </div>
          <div class="content-head">
            <h1>Gestión de Inventario medicamentos</h1>
            <div class="crumbs"><a href="#">Inicio</a><span>/</span>Gestión de Inventario medicamentos en Almacén</div>
          </div>

          <section class="card">
            <div class="pad">
              <div class="row">
                <h2><Icon n="bottle" s="20" />Gestión de Inventario</h2>
                <div class="total"><Icon n="listol" s="12" />Total: <b class="badge tiny primary">2</b></div>
              </div>
              <div class="row search-row">
                <div class="search">
                  <label for="q" aria-label="Buscar"><Icon n="search" s="16" /></label>
                  <input id="q" type="text" placeholder="Buscar producto por nombre">
                </div>
                <button class="btn primary"><Icon n="plus" s="16" />Registrar Producto</button>
              </div>
              <p class="help"><Icon n="info" s="12" />La búsqueda se realiza automáticamente</p>
              <div class="row filter-row">
                <h3><Icon n="filter" s="16" />Filtros de Búsqueda</h3>
                <button class="btn small outline"><Icon n="undo" s="14" />Restablecer Filtros</button>
              </div>

              <div class="panel">
                <h4><Icon n="grid" s="16" />Filtros de Clasificación</h4>
                <div class="fields three">
                  <div><label for="f1"><Icon n="tag" s="13" />Categoría</label><select id="f1"><option>Todas las categorías</option></select></div>
                  <div><label for="f2"><Icon n="tags" s="13" />Tipo</label><select id="f2"><option>Todos los tipos</option></select></div>
                  <div><label for="f3"><Icon n="boxes" s="13" />Stock</label><select id="f3"><option>Todos</option></select></div>
                </div>
              </div>
              <div class="panel second">
                <h4><Icon n="cal" s="16" />Filtros de Fechas</h4>
                <div class="fields">
                  <div><label for="d1"><Icon n="cal" s="13" />Fecha Inicio</label><span class="date"><input id="d1" type="text" value="01/05/2025"><svg width="14" height="14" viewBox="0 0 14 14"><path d="M2 2.500h10v10H2z" fill="none" stroke="#000" stroke-width="1.400" /><path d="M1.500 2h11v3h-11zM3 0h2v2H3zM9 0h2v2H9z" /></svg></span></div>
                  <div><label for="d2"><Icon n="cal" s="13" />Fecha Fin</label><span class="date"><input id="d2" type="text" value="22/05/2025"><svg width="14" height="14" viewBox="0 0 14 14"><path d="M2 2.500h10v10H2z" fill="none" stroke="#000" stroke-width="1.400" /><path d="M1.500 2h11v3h-11zM3 0h2v2H3zM9 0h2v2H9z" /></svg></span></div>
                  <div><label for="d3"><Icon n="hourglass" s="13" />Días para vencimiento</label><select id="d3"><option>90 días</option></select></div>
                  <div><label for="d4"><Icon n="history" s="13" />Sin movimiento por</label><select id="d4"><option>60 días</option></select></div>
                </div>
              </div>

              <div class="export">
                <div class="export-field">
                  <label for="rep"><Icon n="excel" s="16" />Exportación de Reportes</label>
                  <select id="rep"><option>Inventario actual por categoría</option></select>
                </div>
                <button class="btn large success"><Icon n="excel" s="20" />Exportar Reporte</button>
              </div>
            </div>

            <div class="pad results">
              <div class="result-count"><Icon n="tablelist" s="16" />Total de resultados: <b class="badge primary">2</b></div>
              <table class="products">
                <colgroup><col class="p1"><col class="p2"><col class="p3"><col class="p4"><col class="p5"><col class="p6"><col class="p7"><col class="p8"><col></colgroup>
                <thead><tr><th>ID</th><th>Nombre</th><th>Código</th><th>Concentración</th><th>Presentación</th><th>FF</th><th>Stock</th><th>Categoría</th><th class="center">Acciones</th></tr></thead>
                <tbody>
                  <tr v-for="p in products" :key="p.id">
                    <td>{{ p.id }}</td>
                    <td><strong>{{ p.name }}</strong></td>
                    <td><span class="badge warning">Sin Código</span></td>
                    <td>250</td><td>blister</td><td>capsula</td>
                    <td><span class="badge success"><Icon n="boxes" s="12" />{{ p.stock }}</span></td>
                    <td><span class="badge teal"><Icon n="tag" s="12" />orales</span></td>
                    <td><div class="actions">
                      <button class="act primary" aria-label="Editar"><Icon n="edit" s="14" /></button>
                      <button class="act teal" aria-label="Lotes"><Icon n="layers" s="14" /></button>
                      <button class="act success" aria-label="Agregar"><Icon n="plus" s="14" /></button>
                      <button class="act danger" aria-label="Eliminar"><Icon n="trash" s="14" /></button>
                    </div></td>
                  </tr>
                </tbody>
              </table>
            </div>
            <div class="card-foot"></div>
          </section>
        </div>

        <button class="btn teal manual"><Icon n="book" s="16" />Manual de Usuario</button>

        <div class="backdrop">
          <div class="modal" role="dialog" aria-labelledby="mt">
            <div class="modal-head">
              <h5 id="mt"><Icon n="layers" s="21" />Gestión de Lotes: Tramadol</h5>
              <button class="close" aria-label="Cerrar ventana"><Icon n="times" s="18" /></button>
            </div>
            <div class="modal-body">
              <div class="row lots-head">
                <h6><Icon n="layers" s="16" />Lotes registrados</h6>
                <button class="btn small primary tight"><Icon n="plus" s="14" />Agregar Lote</button>
              </div>
              <table class="lots">
                <colgroup><col class="l1"><col class="l2"><col class="l3"><col class="l4"><col class="l5"><col class="l6"><col></colgroup>
                <thead><tr><th>#</th><th>Número</th><th>Cantidad</th><th>Fecha Venc.</th><th>Días Restantes</th><th>Estado</th><th class="center">Acciones</th></tr></thead>
                <tbody>
                  <tr v-for="l in lots" :key="l.n">
                    <td>{{ l.n }}</td>
                    <td><span class="badge teal"><Icon n="hash" s="12" />{{ l.code }}</span></td>
                    <td>{{ l.qty }}</td>
                    <td><span class="badge success"><Icon n="calx" s="12" />22/04/2027</span></td>
                    <td><span class="badge success"><Icon n="clock" s="12" />699 días restantes</span></td>
                    <td>
                      <span v-if="!l.derived" class="badge gray"><Icon n="minus" s="12" />Sin derivar</span>
                      <div v-else class="stack">
                        <span class="pill"><Icon n="exchange" s="12" />{{ l.derived }}</span>
                        <button class="btn small outline tight"><Icon n="info" s="14" />Ver detalles</button>
                      </div>
                    </td>
                    <td><div class="actions">
                      <button class="act primary" aria-label="Editar lote"><Icon n="edit" s="14" /></button>
                      <button class="act danger" aria-label="Eliminar lote"><Icon n="trash" s="14" /></button>
                      <button class="act teal" aria-label="Copiar lote"><Icon n="copy" s="14" /></button>
                    </div></td>
                  </tr>
                </tbody>
              </table>
            </div>
            <div class="modal-foot"><button class="btn gray tight"><Icon n="times" s="18" />Cerrar</button></div>
          </div>
        </div>
      </div>
    </div>
  </div>
</template>

<style>
html, body { background: #fff; }
body { overflow: hidden; }
</style>

<style scoped>
* { box-sizing: border-box; }
h1, h2, h3, h4, h5, h6, p { margin: 0; }
button, input, select { font-family: inherit; }
a { text-decoration: none; }
.ic { display: block; flex: none; }
.window { height: 100vh; display: flex; flex-direction: column; overflow: hidden; font-family: "Noto Sans CJK SC", "Noto Sans", sans-serif; font-size: 14px; line-height: 24px; color: #212529; }

.chrome { flex: none; height: 45px; padding: 4px 0 6px 12px; display: flex; background: #3c3c3c; border-bottom: 1px solid #4a4a4a; font-family: "Open Sans", sans-serif; }
.nav-btns { display: flex; gap: 12px; padding-right: 14px; }
.nav-btns button { width: 24px; padding: 0; border: 0; background: none; display: flex; align-items: center; justify-content: center; }
.omnibox { flex: 1; height: 34px; border-radius: 17px; background: #282828; display: flex; align-items: center; gap: 26px; padding: 0 16px 0 5px; }
.site-info { width: 24px; height: 24px; border-radius: 12px; background: #3c3c3c; display: flex; align-items: center; justify-content: center; }
.url { flex: 1; margin-left: -17px; font-size: 13px; color: #fff; }
.url i { font-style: normal; color: #c7c7c7; }
.extensions { display: flex; align-items: center; gap: 18px; height: 34px; padding: 0 8px 0 18px; }
.divider { width: 2px; height: 16px; background: #5e5e5e; }
.update { height: 34px; padding: 0 3px 0 10px; border: 0; border-radius: 17px 0 0 17px; background: #004a77; color: #c2e7ff; font-size: 12px; display: flex; align-items: center; gap: 8px; white-space: nowrap; }

.viewport { flex: 1; min-height: 0; display: flex; }
.edge { flex: none; width: 2px; background: linear-gradient(#3a5f80 0 19px, #6093cd 19px 107px, #fff 107px); }
.page { flex: 1; min-width: 0; position: relative; display: flex; overflow: hidden; background: #f4f6f9; }

.sidebar { flex: none; width: 250px; background: #343a40; color: #c2c7d0; z-index: 2; display: flex; flex-direction: column; overflow: hidden; box-shadow: 0 14px 28px rgba(0,0,0,.25), 0 10px 10px rgba(0,0,0,.22); clip-path: inset(0 -60px 0 0); }
.brand { flex: none; height: 57px; border-bottom: 1px solid #4b545c; display: flex; align-items: center; gap: 3px; padding-left: 15px; background: #343a40; color: rgba(255,255,255,.8); font-size: 18px; z-index: 1; }
.menu { margin-top: -12px; padding: 0 8px; }
.item { display: block; min-height: 40px; margin-bottom: 3px; padding: 8px 8px 8px 16px; border-radius: 4px; color: #c2c7d0; line-height: 24px; }
.mi { display: inline-flex; width: 28px; margin-right: 5px; justify-content: center; vertical-align: -3px; }
.first { display: flex; align-items: center; }
.caret { margin: 0 8px 0 auto; }
.active { background: #007bff; color: #fff; box-shadow: 0 1px 3px rgba(0,0,0,.2); }
.group { padding: 6px 12px 7px; font-size: 13px; font-weight: 700; color: #007bff; }
.plain { padding-top: 8px; color: #c2c7d0; }
.heading { height: 50px; padding: 15px 16px 11px; font-size: 13px; color: #6b7178; }

.main { flex: 1; min-width: 0; display: flex; flex-direction: column; }
.navbar { flex: none; height: 57px; background: #fff; border-bottom: 1px solid #dee2e6; display: flex; align-items: center; justify-content: space-between; padding: 0 8px 0 24px; }
.bare { border: 0; background: none; padding: 0; color: rgba(0,0,0,.5); }
.nav-right { display: flex; align-items: center; gap: 33px; color: rgba(0,0,0,.5); }
.user { color: rgba(0,0,0,.5); }
.content-head { flex: none; height: 73px; padding: 17px 7px 0 24px; display: flex; justify-content: space-between; }
h1 { font-size: 26px; font-weight: 400; line-height: 30px; }
.crumbs { color: #6c757d; }
.crumbs a { color: #007bff; }
.crumbs span { margin: 0 8px; }

.card { flex: 1; margin-left: 16px; background: #fff; border-radius: 4px 0 0 0; box-shadow: 0 0 1px rgba(0,0,0,.13), 0 1px 3px rgba(0,0,0,.2); display: flex; flex-direction: column; }
.pad { padding: 12px 18px 0 20px; }
.row { display: flex; justify-content: space-between; align-items: flex-start; }
h2 { display: flex; align-items: center; gap: 8px; font-size: 18px; line-height: 24px; color: #007bff; }
.total { display: flex; align-items: center; gap: 4px; height: 29px; padding: 0 8px; border-radius: 4px; background: #f8f9fa; font-size: 11px; font-weight: 700; color: #1f2d3d; }
.search-row { margin-top: 16px; }
.search { display: flex; width: 56.5%; height: 38px; border: 1px solid #ced4da; border-radius: 4px; }
.search label { width: 41px; display: flex; align-items: center; justify-content: center; border-right: 1px solid #ced4da; color: #495057; }
.search input { flex: 1; min-width: 0; border: 0; background: none; padding: 0 12px; font-size: 14px; }
.search input::placeholder { color: #939ba2; }
.help { display: flex; align-items: center; gap: 5px; margin-top: 4px; font-size: 11px; line-height: 20px; color: #6c757d; }
.filter-row { margin-top: 15px; }
h3 { display: flex; gap: 7px; font-size: 14px; line-height: 18px; color: #007bff; }

.btn { display: inline-flex; align-items: center; gap: 8px; height: 38px; padding: 0 12px; border: 1px solid transparent; border-radius: 4px; font-size: 14px; line-height: 20px; color: #fff; white-space: nowrap; }
.btn.small { height: 31px; padding: 0 8px; border-radius: 3px; font-size: 13px; }
.btn.large { height: 48px; padding: 0 16px; font-size: 18px; border-radius: 5px; }
.btn.tight { gap: 4px; }
.btn.outline { background: none; border-color: #6c757d; color: #6c757d; }
.primary { background: #007bff; color: #fff; }
.success { background: #28a745; color: #fff; }
.danger { background: #dc3545; color: #fff; }
.teal { background: #17a2b8; color: #fff; }
.gray { background: #6c757d; color: #fff; }
.warning { background: #ffc107; color: #1f2d3d; }

.panel { margin-top: 8px; border-radius: 4px; box-shadow: 0 0 1px rgba(0,0,0,.13), 0 1px 3px rgba(0,0,0,.2); }
.second { margin-top: 15px; }
h4 { display: flex; align-items: center; gap: 7px; height: 41px; padding: 0 20px; border-bottom: 1px solid rgba(0,0,0,.13); background: rgba(0,0,0,.03); font-size: 14px; color: #1f2d3d; }
.fields { display: grid; grid-template-columns: repeat(4, 1fr); gap: 15px; padding: 12px 20px 8px; }
.three { grid-template-columns: repeat(3, 1fr); }
.fields label { display: flex; align-items: center; gap: 5px; margin-bottom: 8px; font-size: 11px; line-height: 20px; font-weight: 700; color: #6c757d; }
select, .date { display: flex; width: 100%; height: 31px; border: 1px solid #ced4da; border-radius: 3px; padding: 0 8px; background: #fff; color: #495057; font-size: 13px; }
.date { align-items: center; padding: 0 11px 0 8px; }
.date input { flex: 1; min-width: 0; border: 0; background: none; padding: 0; color: #495057; font-size: 13px; }
.export { margin-top: 16px; border-top: 1px solid rgba(0,0,0,.1); padding: 15px 0 12px; display: flex; justify-content: space-between; align-items: flex-end; }
.export-field { width: 49.500%; }
.export label { display: flex; align-items: center; gap: 7px; margin-bottom: 6px; line-height: 22px; font-weight: 700; color: #007bff; }
.export select { height: 38px; padding: 0 12px; border-radius: 4px; font-size: 14px; }
.results { border-top: 1px solid rgba(0,0,0,.13); padding-top: 18px; flex: none; height: 255px; }
.result-count { display: flex; align-items: center; gap: 4px; margin-bottom: 14px; font-weight: 700; color: #6c757d; }
.card-foot { flex: 1; background: rgba(0,0,0,.03); }

.badge { display: inline-flex; align-items: center; gap: 4px; height: 18px; padding: 0 5px; border-radius: 4px; font-size: 11px; line-height: 18px; font-weight: 700; white-space: nowrap; vertical-align: middle; }
.tiny { height: 13px; padding: 0 3px; font-size: 9px; line-height: 13px; }
.pill { display: inline-flex; align-items: center; gap: 6px; height: 28px; padding: 0 15px; border-radius: 14px; background: #17a2b8; color: #fff; font-size: 11px; font-weight: 700; }
table { width: 100%; table-layout: fixed; border-collapse: collapse; }
th { text-align: left; color: #495057; background: #e9ecef; border-top: 1px solid #dee2e6; border-bottom: 2px solid #dee2e6; }
td { vertical-align: top; border-top: 1px solid #dee2e6; }
th, td { padding: 12px; }
.center { text-align: center; }
.products tbody tr:nth-child(odd) { background: rgba(0,0,0,.05); }
.actions { display: flex; justify-content: center; gap: 3px; }
.act { display: flex; align-items: center; justify-content: center; height: 31px; padding: 0 9px; border: 0; }
.act:first-child { border-radius: 3px 0 0 3px; }
.act:last-child { border-radius: 0 3px 3px 0; }
.p1 { width: 4.400%; } .p2 { width: 12.700%; } .p3 { width: 10.100%; } .p4 { width: 14.300%; } .p5 { width: 13.300%; } .p6 { width: 8.500%; } .p7 { width: 7.900%; } .p8 { width: 10.500%; }
.manual { position: absolute; right: 3px; bottom: -1px; z-index: 3; box-shadow: 0 8px 16px rgba(0,0,0,.15); }

.backdrop { position: absolute; inset: 0; z-index: 5; background: rgba(0,0,0,.5); padding: 29px 0 0 17px; display: flex; justify-content: center; align-items: flex-start; }
.modal { width: 100%; max-width: 1138px; background: #fff; border-radius: 4px; box-shadow: 0 8px 16px rgba(0,0,0,.5); overflow: hidden; }
.modal-head { display: flex; align-items: center; justify-content: space-between; height: 63px; padding: 0 17px 2px 16px; background: #17a2b8; color: #fff; border-bottom: 1px solid #e9ecef; }
h5 { display: flex; align-items: center; gap: 7px; font-size: 18px; font-weight: 400; }
.close { border: 0; background: none; padding: 0; color: #fff; opacity: .5; }
.modal-body { padding: 16px 16px 35px; }
.lots-head { align-items: center; margin-bottom: 16px; }
h6 { display: flex; align-items: center; gap: 4px; font-size: 14px; color: #007bff; }
.lots th, .lots td { padding: 5px; }
.lots th { line-height: 23px; }
.l1 { width: 2.600%; } .l2 { width: 16.900%; } .l3 { width: 10.600%; } .l4 { width: 13.600%; } .l5 { width: 19%; } .l6 { width: 21.500%; }
.stack { display: flex; flex-direction: column; align-items: flex-start; gap: 4px; }
.modal-foot { display: flex; justify-content: flex-end; padding: 16px; border-top: 1px solid #e9ecef; }
</style>
